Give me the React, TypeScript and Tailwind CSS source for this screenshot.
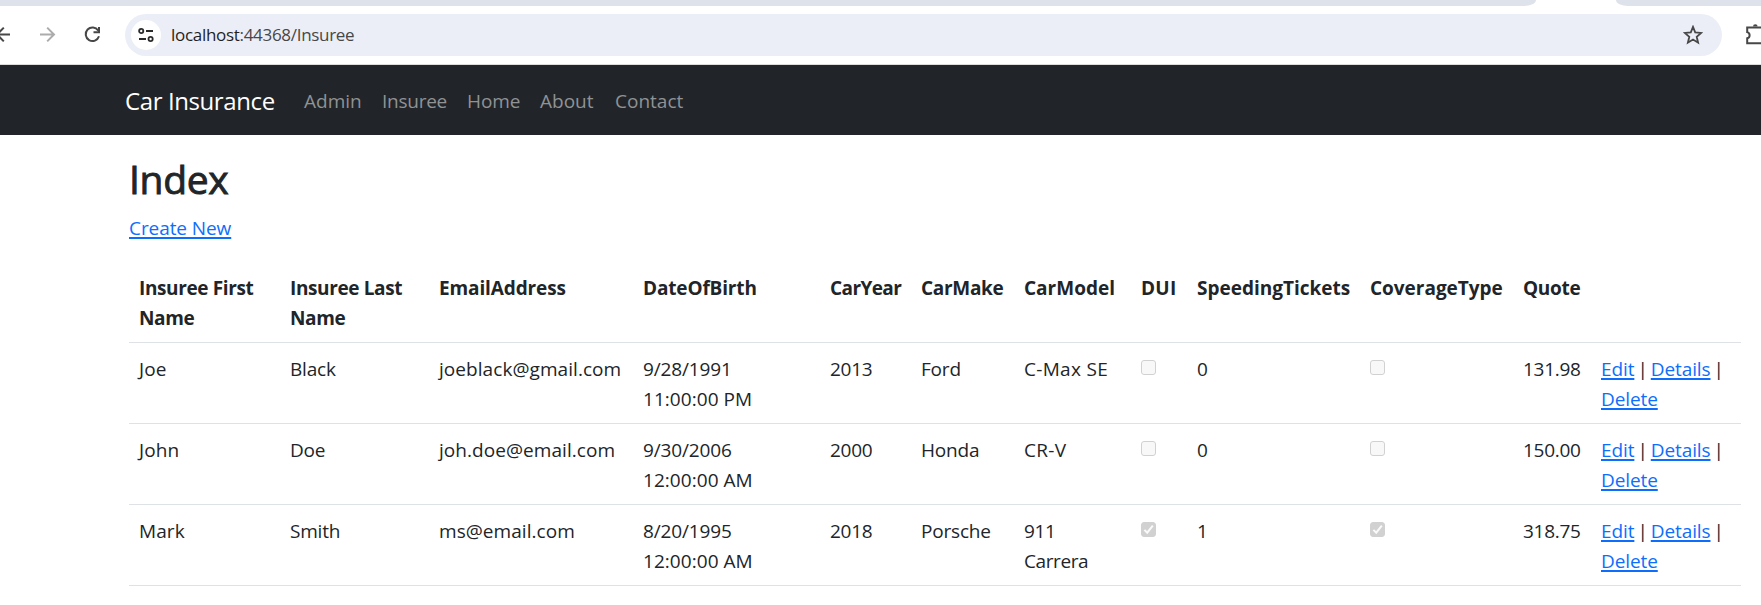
import React from "react";

type Row = {
  first: string;
  last: string;
  email: string;
  date: string;
  time: string;
  year: string;
  make: string;
  model: string;
  dui: boolean;
  tickets: string;
  full: boolean;
  quote: string;
};

const rows: Row[] = [
  { first: "Joe", last: "Black", email: "joeblack@gmail.com", date: "9/28/1991", time: "11:00:00 PM", year: "2013", make: "Ford", model: "C-Max SE", dui: false, tickets: "0", full: false, quote: "131.98" },
  { first: "John", last: "Doe", email: "joh.doe@email.com", date: "9/30/2006", time: "12:00:00 AM", year: "2000", make: "Honda", model: "CR-V", dui: false, tickets: "0", full: false, quote: "150.00" },
  { first: "Mark", last: "Smith", email: "ms@email.com", date: "8/20/1995", time: "12:00:00 AM", year: "2018", make: "Porsche", model: "911 Carrera", dui: true, tickets: "1", full: true, quote: "318.75" },
];

const headers = [
  { label: "Insuree First Name", style: "w-[151px] tracking-[-0.38px]" },
  { label: "Insuree Last Name", style: "w-[149px] tracking-[-0.38px]" },
  { label: "EmailAddress", style: "w-[204px] tracking-[-0.12px]" },
  { label: "DateOfBirth", style: "w-[187px] tracking-[-0.15px]" },
  { label: "CarYear", style: "w-[91px] tracking-[-0.6px]" },
  { label: "CarMake", style: "w-[103px] tracking-[-0.3px]" },
  { label: "CarModel", style: "w-[117px] tracking-[0px]" },
  { label: "DUI", style: "w-[56px] tracking-[0.3px]" },
  { label: "SpeedingTickets", style: "w-[173px] tracking-[0px]" },
  { label: "CoverageType", style: "w-[153px] tracking-[-0.02px]" },
  { label: "Quote", style: "w-[78px] tracking-[-0.3px]" },
  { label: "", style: "w-[150px]" },
];

function Check({ on }: { on: boolean }) {
  return (
    <svg width="15" height="15" viewBox="0 0 15 15" className="mt-[6px] block" role="checkbox" aria-checked={on}>
      <rect x="0.5" y="0.5" width="14" height="14" rx="2.5" fill={on ? "#d1d1d1" : "#f8f8f8"} stroke="#d1d1d1" />
      {on && <path d="M3.4 7.9 6.2 10.7 11.8 3.6" fill="none" stroke="#fafafa" strokeWidth="2" />}
    </svg>
  );
}

function Cell({ children, className = "" }: { children: React.ReactNode; className?: string }) {
  return <td className={`px-[10px] pt-[11px] pb-[9px] align-top ${className}`}>{children}</td>;
}

function Link({ children }: { children: React.ReactNode }) {
  return (
    <a href="#" className="text-[#0d6efd] underline decoration-[1.5px] underline-offset-[2px]">
      {children}
    </a>
  );
}

function BrowserBar() {
  return (
    <header>
      <div className="flex h-[6px] justify-between bg-white">
        <div className="w-[1536px] rounded-br-[12px_6px] bg-[#dee2ea]" />
        <div className="w-[145px] rounded-bl-[12px_6px] bg-[#dee2ea]" />
      </div>
      <div className="flex h-[59px] items-center border-b border-[#dcdcdc]">
        <svg width="125" height="42" viewBox="0 0 125 42" fill="none" strokeWidth="2">
          <path d="M10 20.5H-4M3.8 13.6-3 20.5 3.8 27.4" stroke="#474747" />
          <path d="M40 20.5H54M47.2 13.6 54 20.5 47.2 27.4" stroke="#acacac" />
          <path d="M98.2 16.5A6.8 6.8 0 1 0 99 22.3M99 13v5.3h-5.5" stroke="#474747" />
        </svg>
        <div className="flex h-[42px] w-[1597px] items-center rounded-full bg-[#ebeef7] pr-[19px] pl-[6px]">
          <div className="flex size-[30px] items-center justify-center rounded-full bg-white">
            <svg width="16" height="14" viewBox="0 0 16 14" fill="none" stroke="#2b2b2b" strokeWidth="1.8">
              <circle cx="3.2" cy="3" r="2.1" />
              <path d="M8 3h7M1 11h7" />
              <circle cx="12.6" cy="11" r="2.1" />
            </svg>
          </div>
          <span className="ml-[10px] text-[17px] tracking-[-0.3px] text-[#474747]">
            <span className="text-[#1f1f1f]">localhost</span>:44368/Insuree
          </span>
          <svg width="20" height="20" viewBox="0 0 20 20" className="ml-auto" fill="none" stroke="#474747" strokeWidth="1.8">
            <path d="m10 1.9 2.2 5.5 6 .5-4.5 3.9 1.4 5.9L10 14.6l-5.1 3.1 1.4-5.9L1.8 7.9l6-.5z" />
          </svg>
        </div>
        <svg width="39" height="42" viewBox="0 0 39 42" fill="none" stroke="#474747" strokeWidth="2">
          <path d="M39 13.5H25.2v4.6a3.2 3.2 0 0 1 0 6.2v4.9H39" />
          <path d="M31 12.5a2.3 2.3 0 0 1 4.6 0z" fill="#474747" stroke="none" />
        </svg>
      </div>
    </header>
  );
}

export default function App() {
  return (
    <div className="h-[605px] w-[1761px] overflow-hidden bg-white font-['Open_Sans',sans-serif] text-[19px] leading-[30px] tracking-[-0.3px] text-[#212529]">
      <BrowserBar />
      <nav className="flex h-[70px] items-center bg-[#212529] pt-[2px] pl-[125px] text-[#909294]">
        <span className="w-[179px] text-[24px] tracking-[-0.4px] text-white">Car Insurance</span>
        <span className="w-[78px] tracking-[0px]">Admin</span>
        <span className="w-[85px] tracking-[-0.25px]">Insuree</span>
        <span className="w-[73px] tracking-[-0.1px]">Home</span>
        <span className="w-[75px] tracking-[0px]">About</span>
        <span className="tracking-[0px]">Contact</span>
      </nav>
      <main className="pl-[129px]">
        <h2 className="pt-[20px] text-[39px] leading-[48px] font-medium [-webkit-text-stroke:0.9px_#212529]">Index</h2>
        <p className="pt-[10px] tracking-[-0.08px]">
          <Link>Create New</Link>
        </p>
        <table className="mt-[18px] w-[1612px] table-fixed border-collapse text-left">
          <thead>
            <tr className="h-[81px] border-b border-[#dee2e6]">
              {headers.map((h, i) => (
                <th key={i} className={`${h.style} px-[10px] pt-[12px] pb-[8px] align-top font-bold`}>
                  {h.label}
                </th>
              ))}
            </tr>
          </thead>
          <tbody>
            {rows.map((r) => (
              <tr key={r.first} className="h-[81px] border-b border-[#dee2e6]">
                <Cell className="tracking-[0.1px]">{r.first}</Cell>
                <Cell className="tracking-[-0.2px]">{r.last}</Cell>
                <Cell className="tracking-[0.06px]">{r.email}</Cell>
                <Cell className="tracking-[-0.15px]">
                  {r.date}
                  <br />
                  <span className="tracking-[0.05px]">{r.time}</span>
                </Cell>
                <Cell>{r.year}</Cell>
                <Cell className="tracking-[-0.2px]">{r.make}</Cell>
                <Cell className={r.model === "911 Carrera" ? "tracking-[-0.4px]" : "tracking-[0.3px]"}>{r.model}</Cell>
                <Cell><Check on={r.dui} /></Cell>
                <Cell>{r.tickets}</Cell>
                <Cell><Check on={r.full} /></Cell>
                <Cell>{r.quote}</Cell>
                <Cell className="tracking-[-0.1px] [word-spacing:-1.8px]">
                  <Link>Edit</Link> | <Link>Details</Link> |<br />
                  <Link>Delete</Link>
                </Cell>
              </tr>
            ))}
          </tbody>
        </table>
      </main>
    </div>
  );
}
